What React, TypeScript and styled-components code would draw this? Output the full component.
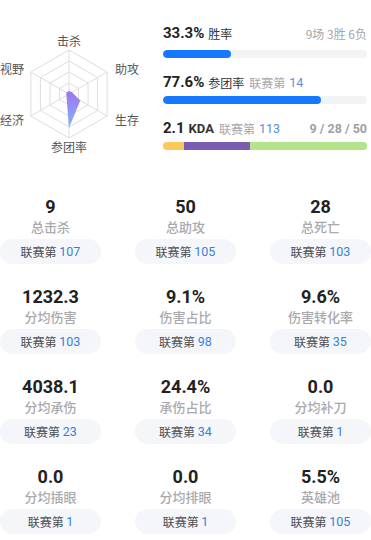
import React from 'react';
import styled, { createGlobalStyle } from 'styled-components';

const GlobalStyle = createGlobalStyle`
  body {
    margin: 0;
    background: #ffffff;
    font-family: Roboto, "Noto Sans CJK SC", sans-serif;
  }
`;

const CX = 69;
const CY = 94;
const R = 44;
const ANGLES = [-90, -30, 30, 90, 150, 210];

const point = (angle: number, r: number) => {
  const a = (angle * Math.PI) / 180;
  return [CX + r * Math.cos(a), CY + r * Math.sin(a)];
};

const hexPoints = (r: number) =>
  ANGLES.map((a) => point(a, r).join(',')).join(' ');

// kill, assist, survive, team, economy, vision
const radarValues = [3, 3.5, 13, 34, 3, 3];

const radarLabels = [
  { text: '击杀', x: 69, y: 40, anchor: 'middle' },
  { text: '助攻', x: 115, y: 68, anchor: 'start' },
  { text: '生存', x: 115, y: 119, anchor: 'start' },
  { text: '参团率', x: 69, y: 146, anchor: 'middle' },
  { text: '经济', x: 0, y: 119, anchor: 'start' },
  { text: '视野', x: 0, y: 68, anchor: 'start' }
];

const stats = [
  { value: '9', label: '总击杀', rank: 107 },
  { value: '50', label: '总助攻', rank: 105 },
  { value: '28', label: '总死亡', rank: 103 },
  { value: '1232.3', label: '分均伤害', rank: 103 },
  { value: '9.1%', label: '伤害占比', rank: 98 },
  { value: '9.6%', label: '伤害转化率', rank: 35 },
  { value: '4038.1', label: '分均承伤', rank: 23 },
  { value: '24.4%', label: '承伤占比', rank: 34 },
  { value: '0.0', label: '分均补刀', rank: 1 },
  { value: '0.0', label: '分均插眼', rank: 1 },
  { value: '0.0', label: '分均排眼', rank: 1 },
  { value: '5.5%', label: '英雄池', rank: 105 }
];

const Radar = () => (
  <RadarSvg width={150} height={160} viewBox="0 0 150 160">
    <defs>
      <linearGradient id="radarFill" x1="0" y1="0" x2="0" y2="1">
        <stop offset="0%" stopColor="#9b6cf2" />
        <stop offset="100%" stopColor="#7cb2f8" />
      </linearGradient>
    </defs>
    {[11, 22, 33, 44].map((r) => (
      <polygon key={r} points={hexPoints(r)} fill="none" stroke="#dedede" strokeWidth={1} />
    ))}
    {ANGLES.map((a) => {
      const [x, y] = point(a, R);
      return <line key={a} x1={CX} y1={CY} x2={x} y2={y} stroke="#dedede" strokeWidth={1} />;
    })}
    <polygon
      points={ANGLES.map((a, i) => point(a, radarValues[i]).join(',')).join(' ')}
      fill="url(#radarFill)"
      fillOpacity={0.95}
    />
    {radarLabels.map((l) => (
      <RadarLabel key={l.text} x={l.x} y={l.y} textAnchor={l.anchor} dominantBaseline="central">
        {l.text}
      </RadarLabel>
    ))}
  </RadarSvg>
);

export default function App() {
  return (
    <>
      <GlobalStyle />
      <Page>
        <Top>
          <Radar />
          <Summary>
            <SummaryRow>
              <Header>
                <Figure>33.3%</Figure>
                <Caption>胜率</Caption>
                <Spacer />
                <Muted>9场 3胜 6负</Muted>
              </Header>
              <Track gap={7}>
                <Fill style={{ width: '33.3%' }} />
              </Track>
            </SummaryRow>
            <SummaryRow spaced>
              <Header>
                <Figure>77.6%</Figure>
                <Caption>参团率</Caption>
                <Muted>联赛第</Muted>
                <RankNum>14</RankNum>
              </Header>
              <Track gap={4}>
                <Fill style={{ width: '77.6%' }} />
              </Track>
            </SummaryRow>
            <SummaryRow spaced>
              <Header>
                <Figure>2.1</Figure>
                <KdaTag>KDA</KdaTag>
                <Muted>联赛第</Muted>
                <RankNum>113</RankNum>
                <Spacer />
                <KdaSplit>9 / 28 / 50</KdaSplit>
              </Header>
              <Track gap={4}>
                <Segment color="#fbc85a" style={{ width: `${(9 / 87) * 100}%` }} />
                <Segment color="#7b5db0" style={{ width: `${(28 / 87) * 100}%` }} />
                <Segment color="#b3e38b" style={{ width: `${(50 / 87) * 100}%` }} />
              </Track>
            </SummaryRow>
          </Summary>
        </Top>
        <StatGrid>
          {stats.map((s) => (
            <StatCell key={s.label}>
              <StatValue>{s.value}</StatValue>
              <StatLabel>{s.label}</StatLabel>
              <RankPill>
                联赛第 <PillNum>{s.rank}</PillNum>
              </RankPill>
            </StatCell>
          ))}
        </StatGrid>
      </Page>
    </>
  );
}

const Page = styled.div`
  width: 371px;
  height: 540px;
  overflow: hidden;
`;

const Top = styled.div`
  display: flex;
  height: 197px;
`;

const RadarSvg = styled.svg`
  flex: none;
  margin-right: 13px;
`;

const RadarLabel = styled.text`
  font-family: "Noto Sans CJK SC", sans-serif;
  font-size: 12px;
  fill: #555555;
`;

const Summary = styled.div`
  width: 204px;
  padding-top: 23px;
  display: flex;
  flex-direction: column;
`;

const SummaryRow = styled.div<{ spaced?: boolean }>`
  margin-top: ${(p) => (p.spaced ? '14px' : '0')};
`;

const Header = styled.div`
  display: flex;
  align-items: center;
  height: 20px;
  white-space: nowrap;
`;

const Figure = styled.span`
  font-family: Roboto, sans-serif;
  font-weight: 700;
  font-size: 15px;
  color: #222222;
  margin-right: 4px;
`;

const Caption = styled.span`
  font-family: "Noto Sans CJK SC", sans-serif;
  font-size: 12px;
  color: #333333;
  margin-right: 5px;
`;

const KdaTag = styled.span`
  font-family: Roboto, sans-serif;
  font-weight: 700;
  font-size: 13px;
  color: #333333;
  margin-right: 5px;
`;

const Muted = styled.span`
  font-family: "Noto Sans CJK SC", sans-serif;
  font-size: 12px;
  color: #a6a6ab;
`;

const RankNum = styled.span`
  font-family: Roboto, sans-serif;
  font-size: 12.5px;
  color: #5b8fd6;
  margin-left: 4px;
`;

const KdaSplit = styled.span`
  font-family: Roboto, sans-serif;
  font-weight: 700;
  font-size: 12.5px;
  color: #a0a0a5;
`;

const Spacer = styled.span`
  flex: 1;
`;

const Track = styled.div<{ gap: number }>`
  display: flex;
  height: 8px;
  margin-top: ${(p) => p.gap}px;
  border-radius: 4px;
  background: #f2f3f5;
  overflow: hidden;
`;

const Fill = styled.div`
  height: 100%;
  border-radius: 4px;
  background: #1677ff;
`;

const Segment = styled.div<{ color: string }>`
  height: 100%;
  background: ${(p) => p.color};
`;

const StatGrid = styled.div`
  display: grid;
  grid-template-columns: repeat(3, 101px);
  justify-content: space-between;
  row-gap: 23px;
`;

const StatCell = styled.div`
  display: flex;
  flex-direction: column;
  align-items: center;
`;

const StatValue = styled.div`
  font-family: Roboto, sans-serif;
  font-weight: 700;
  font-size: 18px;
  line-height: 20px;
  color: #222222;
`;

const StatLabel = styled.div`
  font-family: "Noto Sans CJK SC", sans-serif;
  font-weight: 500;
  font-size: 13px;
  line-height: 20px;
  color: #a9a9ae;
`;

const RankPill = styled.div`
  margin-top: 2px;
  width: 100%;
  height: 25px;
  border-radius: 13px;
  background: #f4f6f9;
  display: flex;
  align-items: center;
  justify-content: center;
  font-family: "Noto Sans CJK SC", sans-serif;
  font-size: 12px;
  color: #4d4d52;
  white-space: pre;
`;

const PillNum = styled.span`
  font-family: Roboto, sans-serif;
  font-size: 12.5px;
  color: #3a80d8;
`;
